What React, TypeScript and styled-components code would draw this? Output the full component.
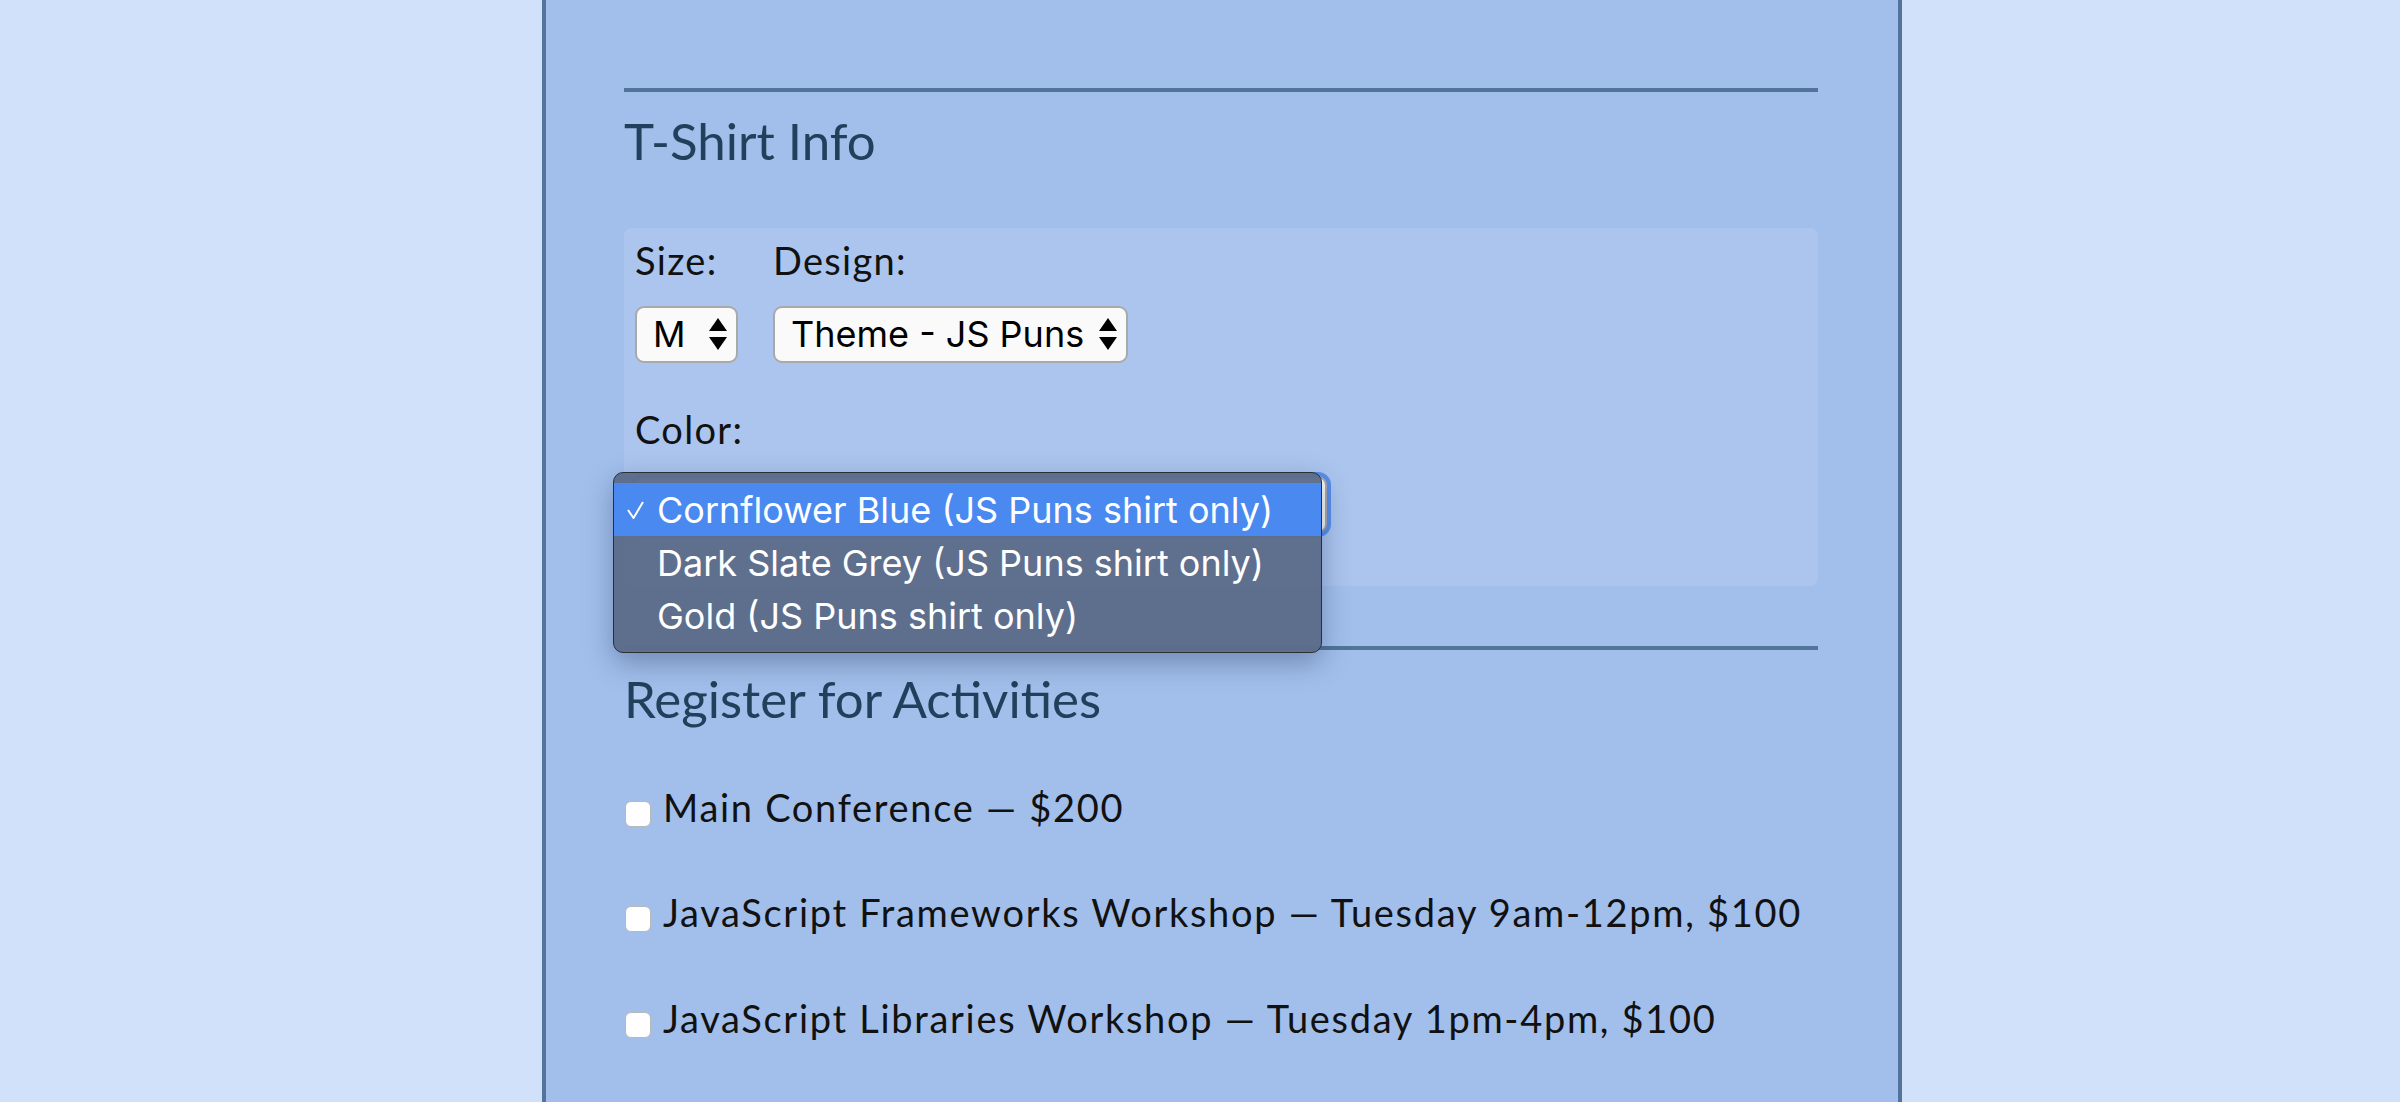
import { FC } from 'react';
import styled, { createGlobalStyle } from 'styled-components';

const GlobalStyle = createGlobalStyle`
  html, body {
    margin: 0;
    padding: 0;
    background: #d1e1f9;
    font-family: Lato, "Noto Sans", sans-serif;
  }
`;

const Panel = styled.main`
  box-sizing: border-box;
  width: 1360px;
  height: 1102px;
  margin-left: 542px;
  padding: 88px 80px 0 78px;
  background: #a2bfeb;
  border-left: 4px solid #52739a;
  border-right: 4px solid #52739a;
  overflow: hidden;
`;

const Rule = styled.hr<{ $gap?: number }>`
  height: 4px;
  margin: ${(p) => p.$gap ?? 0}px 0 0;
  border: none;
  background: #52739a;
`;

const SectionTitle = styled.h2`
  margin: 18px 0 0;
  font-size: 51px;
  line-height: 1.2;
  font-weight: 400;
  color: #21405c;
`;

const ShirtBox = styled.div`
  margin-top: 57px;
  padding: 10px 11px 53px;
  background: #abc5ee;
  border-radius: 8px;
`;

const FieldRow = styled.div`
  display: flex;
  gap: 35px;
`;

const Field = styled.div<{ $top?: number }>`
  display: flex;
  flex-direction: column;
  align-items: flex-start;
  margin-top: ${(p) => p.$top ?? 0}px;
`;

const Label = styled.label`
  font-size: 38px;
  line-height: 1.2;
  letter-spacing: 1.3px;
  color: #111;
`;

const SelectBox = styled.div<{ $width: number; $focused?: boolean; $top?: number }>`
  position: relative;
  box-sizing: border-box;
  display: flex;
  align-items: center;
  justify-content: space-between;
  width: ${(p) => p.$width}px;
  height: 57px;
  margin-top: ${(p) => p.$top ?? 22}px;
  padding: 0 9px 0 16px;
  background: #fafafa;
  border: 2px solid #a9a9a9;
  border-radius: 9px;
  font-family: Inter, "Liberation Sans", sans-serif;
  font-size: 36px;
  color: #000;
  box-shadow: ${(p) => (p.$focused ? '0 0 0 4px rgba(62, 124, 232, 0.75)' : 'none')};
`;

const SelectValue = styled.span<{ $covered?: boolean }>`
  visibility: ${(p) => (p.$covered ? 'hidden' : 'visible')};
`;

const Arrows: FC = () => (
  <svg width="18" height="32" viewBox="0 0 18 32" aria-hidden="true">
    <path d="M9 0 L18 13 L0 13 Z" fill="#000" />
    <path d="M0 19 L18 19 L9 32 Z" fill="#000" />
  </svg>
);

const Menu = styled.ul`
  position: absolute;
  left: -24px;
  top: -6px;
  z-index: 2;
  box-sizing: border-box;
  width: 709px;
  margin: 0;
  padding: 10px 0;
  list-style: none;
  background: rgba(92, 108, 138, 0.97);
  border: 1px solid #2b2f38;
  border-radius: 10px;
  box-shadow: 0 10px 28px rgba(20, 40, 80, 0.35);
  font-family: Inter, "Liberation Sans", sans-serif;
`;

const MenuItem = styled.li<{ $active?: boolean }>`
  display: flex;
  align-items: center;
  height: 53px;
  padding-left: 13px;
  font-size: 36px;
  color: #fff;
  background: ${(p) => (p.$active ? '#4a8af0' : 'transparent')};
`;

const Tick = styled.span`
  display: flex;
  width: 30px;
  flex: none;
`;

const Activity = styled.label<{ $top: number }>`
  display: flex;
  align-items: flex-start;
  gap: 12px;
  margin-top: ${(p) => p.$top}px;
  font-size: 38px;
  line-height: 1.2;
  letter-spacing: 1.7px;
  color: #111;
`;

const CheckBox = styled.input.attrs({ type: 'checkbox' })`
  appearance: none;
  flex: none;
  width: 26px;
  height: 26px;
  margin: 16px 0 0 1px;
  background: #fff;
  border: 1px solid #b8b8b8;
  border-radius: 6px;
`;

const colors = [
  'Cornflower Blue (JS Puns shirt only)',
  'Dark Slate Grey (JS Puns shirt only)',
  'Gold (JS Puns shirt only)',
];

const activities = [
  'Main Conference — $200',
  'JavaScript Frameworks Workshop — Tuesday 9am-12pm, $100',
  'JavaScript Libraries Workshop — Tuesday 1pm-4pm, $100',
];

const App: FC = () => (
  <>
    <GlobalStyle />
    <Panel>
      <Rule />
      <SectionTitle>T-Shirt Info</SectionTitle>
      <ShirtBox>
        <FieldRow>
          <Field>
            <Label>Size:</Label>
            <SelectBox $width={103}>
              <SelectValue>M</SelectValue>
              <Arrows />
            </SelectBox>
          </Field>
          <Field>
            <Label>Design:</Label>
            <SelectBox $width={355}>
              <SelectValue>Theme - JS Puns</SelectValue>
              <Arrows />
            </SelectBox>
          </Field>
        </FieldRow>
        <Field $top={44}>
          <Label>Color:</Label>
          <SelectBox $width={692} $focused $top={24}>
            {/* value sits under the open menu, so it is not drawn */}
            <SelectValue $covered>{colors[0]}</SelectValue>
            <Arrows />
            <Menu>
              {colors.map((c, i) => (
                <MenuItem key={c} $active={i === 0}>
                  <Tick>
                    {i === 0 && (
                      <svg width="17" height="18" viewBox="0 0 17 18" aria-hidden="true">
                        <path d="M1 9 L6.5 17 L16 1" fill="none" stroke="#fff" strokeWidth="2" />
                      </svg>
                    )}
                  </Tick>
                  {c}
                </MenuItem>
              ))}
            </Menu>
          </SelectBox>
        </Field>
      </ShirtBox>
      <Rule $gap={60} />
      <SectionTitle>Register for Activities</SectionTitle>
      {activities.map((a, i) => (
        <Activity key={a} $top={i === 0 ? 55 : 60}>
          <CheckBox />
          <span>{a}</span>
        </Activity>
      ))}
    </Panel>
  </>
);

export default App;
